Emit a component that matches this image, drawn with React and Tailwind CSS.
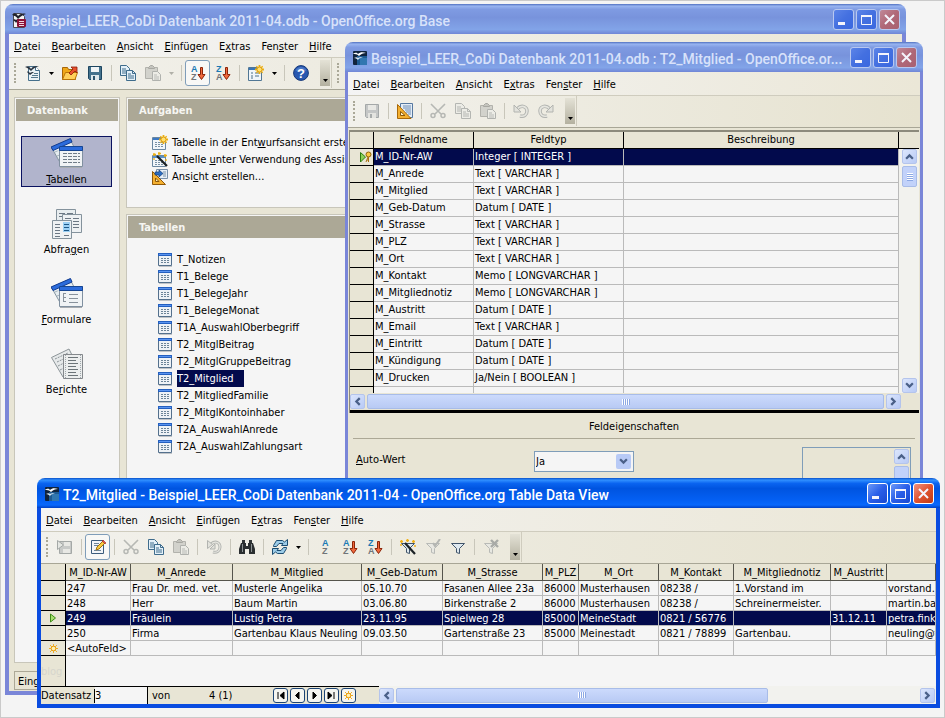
import clsx from "clsx";

const dbTables = [
  "T_Notizen",
  "T1_Belege",
  "T1_BelegeJahr",
  "T1_BelegeMonat",
  "T1A_AuswahlOberbegriff",
  "T2_MitglBeitrag",
  "T2_MitglGruppeBeitrag",
  "T2_Mitglied",
  "T2_MitgliedFamilie",
  "T2_MitglKontoinhaber",
  "T2A_AuswahlAnrede",
  "T2A_AuswahlZahlungsart"
];

const fields = [
  ["M_ID-Nr-AW", "Integer [ INTEGER ]"],
  ["M_Anrede", "Text [ VARCHAR ]"],
  ["M_Mitglied", "Text [ VARCHAR ]"],
  ["M_Geb-Datum", "Datum [ DATE ]"],
  ["M_Strasse", "Text [ VARCHAR ]"],
  ["M_PLZ", "Text [ VARCHAR ]"],
  ["M_Ort", "Text [ VARCHAR ]"],
  ["M_Kontakt", "Memo [ LONGVARCHAR ]"],
  ["M_Mitgliednotiz", "Memo [ LONGVARCHAR ]"],
  ["M_Austritt", "Datum [ DATE ]"],
  ["M_Email", "Text [ VARCHAR ]"],
  ["M_Eintritt", "Datum [ DATE ]"],
  ["M_Kündigung", "Datum [ DATE ]"],
  ["M_Drucken", "Ja/Nein [ BOOLEAN ]"]
];

const columns = [
  { name: "M_ID-Nr-AW", width: "w-[65px]" },
  { name: "M_Anrede", width: "w-[102px]" },
  { name: "M_Mitglied", width: "w-[129px]" },
  { name: "M_Geb-Datum", width: "w-[81px]" },
  { name: "M_Strasse", width: "w-[100px]" },
  { name: "M_PLZ", width: "w-[36px]" },
  { name: "M_Ort", width: "w-[80px]" },
  { name: "M_Kontakt", width: "w-[75px]" },
  { name: "M_Mitgliednotiz", width: "w-[97px]" },
  { name: "M_Austritt", width: "w-[56px]" },
  { name: "", width: "" }
];

const records = [
  ["247", "Frau Dr. med. vet.", "Musterle Angelika", "05.10.70", "Fasanen Allee 23a", "86000", "Musterhausen", "08238 /", "1.Vorstand im", "", "vorstand."],
  ["248", "Herr", "Baum Martin", "03.06.80", "Birkenstraße 2", "86000", "Musterhausen", "08238 /", "Schreinermeister.", "", "martin.ba"],
  ["249", "Fräulein", "Lustig Petra", "23.11.95", "Spielweg 28", "85000", "MeineStadt", "0821 / 56776", "", "31.12.11", "petra.fink"],
  ["250", "Firma", "Gartenbau Klaus Neuling", "09.03.50", "Gartenstraße 23", "85000", "Meinestadt", "0821 / 78899", "Gartenbau.", "", "neuling@t"],
  ["<AutoFeld>", "", "", "", "", "", "", "", "", "", ""]
];

/* ---------- icons ---------- */

function Svg({ size = 16, children }) {
  return (
    <svg width={size} height={size} viewBox={`0 0 ${size} ${size}`} fill="none" aria-hidden="true" className="block shrink-0">
      {children}
    </svg>
  );
}

const AppLogo = () => (
  <Svg>
    <rect x="1" y="1" width="14" height="14" rx="1" fill="#10233c" />
    <path d="M5 6h10v9H5z" fill="#1d5a92" />
    <path d="M8 8h7v7H8z" fill="#3f8ac4" opacity=".6" />
    <path d="M1 4c3-2 4-1 5 0 2-2 5-2 8-1-3 0-5 1-7 3C5 4 3 4 1 4z" fill="#fff" />
    <path d="M2 8c2-1 3-1 4 0 1-1 3-1 5-1-2 1-4 1-5 3-1-1-2-2-4-2z" fill="#dbe8f4" />
  </Svg>
);

const BaseLogo = () => (
  <Svg>
    <path d="M1.500 1.500h8l3 3v11h-11z" fill="#f3f3f3" stroke="#4a4a54" />
    <path d="M0 3c3-3 5-1 6 1 2-2 4-3 8-2-3 1-5 2-8 5-2-3-3-3-6-4z" fill="#20222c" />
    <path d="M1 8c1-1 2-1 3 0 1-1 2-1 3-1l-3 4c-1-2-2-2-3-3z" fill="#20222c" />
    <rect x="5" y="7" width="9" height="8" rx="1" fill="#8c1238" />
    <path d="M7 9h5v1H7zM7 11h5v1H7zM7 13h5v1H7z" fill="#f0d8de" />
  </Svg>
);

const NewIcon = () => (
  <Svg>
    <path d="M3.500 1.500h7l4 4v10h-11z" fill="#eaf2f6" stroke="#46708c" />
    <path d="M10.500 1.500v4h4" fill="#fff" stroke="#46708c" />
    <path d="M0 2c3-2 5 0 6 2 2-3 4-3 8-3-3 1-5 2-8 5-2-2-3-3-6-4z" fill="#28323e" />
    <path d="M2 7c1-1 2 0 3 1 1-1 2-1 4-1l-4 3c-1-1-2-2-3-3z" fill="#28323e" />
    <path d="M9 8.500h4M7 10.500h6M6 12.500h7" stroke="#54788e" />
  </Svg>
);

const OpenIcon = () => (
  <Svg>
    <path d="M.5 14.500v-12h5l1 2h7v10z" fill="#f0a818" stroke="#a86608" />
    <path d="M.5 14.500l3-7h12l-2.500 7z" fill="#ffd05a" stroke="#b87408" />
    <path d="M7 8l4-4-2-2h6v6l-2-2-4 4z" fill="#e8502c" stroke="#8c1c08" strokeWidth=".8" />
  </Svg>
);

const SaveIcon = ({ dim }) => (
  <Svg>
    <path d="M1.500 1.500h13v13h-12l-1-1z" fill={dim ? "#c4c6c6" : "#43718c"} stroke={dim ? "#a4a8a8" : "#1d4560"} />
    <path d="M4 2h8v5H4z" fill={dim ? "#e8e8e4" : "#f0f4f6"} />
    <path d="M4 10h8v5H4z" fill={dim ? "#e4e4e0" : "#dfe8ec"} />
    <path d="M6 11h2v4H6z" fill={dim ? "#a8acac" : "#2a536c"} />
  </Svg>
);

const SaveRecordIcon = () => (
  <Svg>
    <path d="M2.500 2.500h12v12h-12z" fill="#c8cac8" stroke="#a4a8a6" />
    <path d="M7 3h6v4H7zM6 10h7v4H6z" fill="#e8e8e4" />
    <path d="M.5 1.500l6 4.500-6 4.500z" fill="#e4e6e2" stroke="#a4a8a6" />
  </Svg>
);

const CopyIcon = ({ dim }) => {
  const ink = dim ? "#b4b6b2" : "#3f6c8c";
  const paper = dim ? "#ecece6" : "#e4f0f8";
  return (
    <Svg>
      <path d="M.5.5h6l3 3v7h-9z" fill={paper} stroke={ink} />
      <path d="M2 4h4M2 6h5M2 8h4" stroke={ink} />
      <path d="M6.500 5.500h6l3 3v7h-9z" fill={paper} stroke={ink} />
      <path d="M12.500 5.500v3h3M8 9h3M8 11h6M8 13h6" stroke={ink} />
    </Svg>
  );
};

const PasteIcon = () => (
  <Svg>
    <path d="M.5 2.500h12v11H.5z" fill="#d2d2cc" stroke="#b2b2ac" />
    <path d="M3.500 3.500v-1l2-2h2l2 2v1z" fill="#c4c4be" stroke="#a8a8a2" />
    <path d="M7.500 6.500h5l3 3v6h-8z" fill="#ecece6" stroke="#b0b2ae" />
    <path d="M9 10h3M9 12h5M9 14h5" stroke="#b8bab6" />
  </Svg>
);

const CutIcon = () => (
  <Svg>
    <path d="M1 1l10 10M15 1L5 11" stroke="#b6b8b4" strokeWidth="1.600" />
    <circle cx="3" cy="12.500" r="2" stroke="#b6b8b4" strokeWidth="1.500" />
    <circle cx="13" cy="12.500" r="2" stroke="#b6b8b4" strokeWidth="1.500" />
  </Svg>
);

const UndoIcon = ({ flip }) => (
  <svg width="16" height="16" viewBox="0 0 16 16" fill="none" aria-hidden="true" className={clsx("block", flip && "-scale-x-100")}>
    <path d="M4 6c5-5 10-2 10 2 0 4-3 6-7 5" stroke="#b2b4b0" strokeWidth="3.500" />
    <path d="M4 6c5-5 10-2 10 2 0 4-3 6-7 5" stroke="#e6e6e0" strokeWidth="1.600" />
    <path d="M1 2v7h7z" fill="#e2e2dc" stroke="#b2b4b0" />
  </svg>
);

const UndoRecordIcon = () => (
  <Svg>
    <path d="M5 5c5-4 9-1 9 3 0 4-3 6-7 5" stroke="#b2b4b0" strokeWidth="3" />
    <path d="M5 5c5-4 9-1 9 3 0 4-3 6-7 5" stroke="#e6e6e0" strokeWidth="1.200" />
    <path d="M1.500 1.500l5 4-5 4z" fill="#e2e2dc" stroke="#b2b4b0" />
    <path d="M9 5v5H4z" fill="#e2e2dc" stroke="#b2b4b0" />
  </Svg>
);

const SortIcon = ({ desc, plain }) => (
  <svg width="16" height="16" viewBox="0 0 16 16" aria-hidden="true" className="block font-['Liberation_Sans'] text-[9px] font-bold">
    <text x={plain ? 5 : 1} y="7" fill="#1a7ab4">{desc ? "Z" : "A"}</text>
    <text x={plain ? 5 : 1} y="15" fill="#707478">{desc ? "A" : "Z"}</text>
    {!plain && <path d="M10.500 2.500h2v7h2.500l-3.500 5L8 9.500h2.500z" fill="#f0683c" stroke="#8c2408" />}
  </svg>
);

const Star = ({ x, y, r }) => (
  <g transform={`translate(${x} ${y})`}>
    <path d={`M0-${r}V${r}M-${r} 0H${r}`} stroke="#eeb010" strokeWidth="1.800" />
    <path d={`M0-${r}V${r}M-${r} 0H${r}`} stroke="#eeb010" strokeWidth="1.400" transform="rotate(45)" />
    <circle r={r - 2} fill="#ffe070" stroke="#e0a010" />
  </g>
);

const NewFormIcon = () => (
  <Svg>
    <path d="M.5 2.500h13v13H.5z" fill="#f0f5f9" stroke="#517794" />
    <path d="M1 3h12v2H1z" fill="#3a76b8" />
    <path d="M3 8h2M3 11h2M3 13h2M7 8h4M7 11h4" stroke="#4c7088" />
    <Star x={11.5} y={4.5} r={4.5} />
  </Svg>
);

const HelpIcon = () => (
  <svg width="16" height="16" viewBox="0 0 16 16" aria-hidden="true" className="block font-['Liberation_Sans'] text-[13px] font-bold">
    <circle cx="8" cy="8" r="7.400" fill="#2858b0" stroke="#163878" />
    <path d="M2.500 5.500a6 6 0 0 1 11 0c-4 2-7 2-11 0z" fill="#6a94d8" opacity=".5" />
    <text x="8" y="13" textAnchor="middle" fill="#fff">?</text>
  </svg>
);

const DesignIcon = () => (
  <Svg>
    <path d="M3.500.5h12v14h-12z" fill="#e4edf6" stroke="#5678a0" />
    <path d="M6 3h8M6 5h8M8 7h6M9 9h5M11 11h3" stroke="#6c8cb4" />
    <path d="M.5 1.500v14h13.500z" fill="#f4b030" stroke="#a86808" />
    <path d="M3.500 8.500v4h4.500z" fill="#fff4cc" stroke="#8c5808" />
  </Svg>
);

const ViewIcon = () => (
  <Svg>
    <path d="M4.500.5h11v9h-11z" fill="#e8eff6" stroke="#7a90a8" />
    <path d="M11 3h3M11 5h3M11 7h3" stroke="#7890a8" />
    <path d="M.5 2.500v13h13z" fill="#f4b030" stroke="#905808" />
    <path d="M3.500 9v3.500H7z" fill="#fff0c0" stroke="#8c5808" />
    <path d="M3 3h4V1l4 3.500L7 8V6H3z" fill="#2c6cc0" stroke="#14407c" strokeWidth=".7" />
  </Svg>
);

const NewTableIcon = () => (
  <Svg>
    <path d="M.5 2.500h13v12H.5z" fill="#f2f6fa" stroke="#6a87a0" />
    <path d="M1 3h12v2H1z" fill="#3c78c4" />
    <path d="M3 7.500h8M3 9.500h8M3 11.500h8" stroke="#7890a4" strokeDasharray="2 1" />
    <Star x={11.5} y={4.5} r={4.5} />
  </Svg>
);

const WizardIcon = () => (
  <Svg>
    <path d="M.5 3.500h13v11H.5z" fill="#f2f6fa" stroke="#6a87a0" />
    <path d="M1 4h12v2H1z" fill="#5c90c4" />
    <path d="M3 8.500h8M3 10.500h8M3 12.500h8" stroke="#7890a4" strokeDasharray="2 1" />
    <path d="M5 4l10 10" stroke="#1c2226" strokeWidth="2.200" />
    <path d="M2 1v3M1 2.500h3M7 0v3M6 1.500h3M13 2v3M12 3.500h3M14 7v2M2 6v2" stroke="#eeb010" strokeWidth="1.300" />
  </Svg>
);

const TableIcon = () => (
  <Svg size={14}>
    <path d="M.5.5h13v12H.5z" fill="#eef2f6" stroke="#54708c" />
    <path d="M0 0h14v3H0z" fill="#2460c0" />
    <path d="M1 1h12v1H1z" fill="#5a94f0" />
    <path d="M3 5.500h9M3 7.500h9M3 9.500h9" stroke="#6c8498" strokeDasharray="2 1" />
    <path d="M1 13.500h13" stroke="#c0c4c8" />
  </Svg>
);

const TablesLarge = ({ form }) => (
  <Svg size={32}>
    <path d="M.5 9.500L19 1l4 8-8 19h-4z" fill="#e6ecf0" stroke="#8494a0" />
    <path d="M4 14l12-5M6 18l8-3M8 22l6-2" stroke="#a8b4bc" strokeDasharray="3 1" />
    <path d="M0 9L19.500.5l1.500 3.500L2 12.500z" fill="#2c6cdc" stroke="#123c90" />
    <path d="M8.500 8.500h23v20h-23z" fill="#f0f3f5" stroke="#8090a0" />
    <path d="M8.500 8.500h23v4h-23z" fill="#2c6cdc" stroke="#164694" />
    {form ? (
      <path d="M12 15.500h3M12.500 15v9M12 19.500h3M12 23.500h3M18 16.500h9M18 20.500h9M18 24.500h9" stroke="#88929c" />
    ) : (
      <path d="M12 15.500h17M12 18.500h17M12 21.500h17M12 24.500h17" stroke="#707c88" strokeDasharray="4 1" />
    )}
    <path d="M9 29.500h22" stroke="#a8acb0" />
  </Svg>
);

const QueriesLarge = () => (
  <Svg size={32}>
    <path d="M5.500 1.500h19v20h-19z" fill="#e8edef" stroke="#84929c" />
    <path d="M8 5.500h6M16 5.500h6M8 8.500h6M16 8.500h6" stroke="#6c7884" />
    <path d="M11.500 6.500h19v18h-19z" fill="#eef1f3" stroke="#84929c" />
    <path d="M14 10.500h6M22 10.500h6M22 13.500h6M22 16.500h6M22 19.500h6" stroke="#6c7884" />
    <path d="M1.500 12.500h19v18h-19z" fill="#eef1f3" stroke="#84929c" />
    <path d="M4 16.500h5M4 19.500h5M4 22.500h5M4 25.500h5M4 28.500h5M13 27.500h5" stroke="#6c7884" />
    <path d="M12 14h7v10h-7z" fill="#9cd0f4" />
    <path d="M13 16.500h5M13 19.500h5M13 22.500h5" stroke="#1c5888" />
  </Svg>
);

const ReportsLarge = () => (
  <Svg size={32}>
    <path d="M.5 9.500L18 1l7 14-13 14z" fill="#e6e9ea" stroke="#8c9498" />
    <path d="M4 11l13-6M6 14l13-6M7 18l8-4M9 22l6-3" stroke="#8c9498" strokeDasharray="2 1" />
    <path d="M12.500 6.500h19v24h-19z" fill="#eceeee" stroke="#84888c" />
    <path d="M14.500 7v23M29.500 7v23" stroke="#a0a8ac" strokeDasharray="1 1" />
    <path d="M17 9.500h10M17 12.500h8M17 15.500h10M17 18.500h8M17 21.500h10M17 24.500h8M17 27.500h10" stroke="#6c7478" />
  </Svg>
);

const EditIcon = () => (
  <Svg>
    <path d="M1.500 1.500h12v13h-12z" fill="#f2f5f8" stroke="#3c5c7c" />
    <path d="M4 4.500h5M4 6.500h4M4 11.500h7" stroke="#6c8498" />
    <path d="M6 11l1-3 6-6 2 2-6 6z" fill="#f8cc40" stroke="#a07010" />
    <path d="M12 2l1-1 3 3-1 1z" fill="#e05c50" stroke="#a02c20" strokeWidth=".6" />
  </Svg>
);

const FindIcon = () => (
  <Svg>
    <path d="M3 1h3v3H3zM10 1h3v3h-3z" fill="#303436" />
    <path d="M2 4h5v3h2V4h5l2 6v5h-6v-5H6v5H0v-5z" fill="#2a2e30" />
    <path d="M3.500 5v8M12.500 5v8" stroke="#8c9294" />
  </Svg>
);

const RefreshIcon = () => (
  <Svg>
    <path d="M1.500 7.500v-1l3-5h6l2 1.500L15.500.5v6h-6l1.500-2H7l-2.500 3z" fill="#9ccce8" stroke="#1c4c70" />
    <path d="M14.500 8.500v1l-3 5h-6l-2-1.500L.5 15.500v-6h6l-1.500 2h4l2.500-3z" fill="#9ccce8" stroke="#1c4c70" />
  </Svg>
);

const FilterIcon = ({ kind }) => {
  const dim = kind === "apply" || kind === "remove";
  return (
    <Svg>
      <path d="M1.500 4.500h13l-5 5v5l-3-1v-4z" fill={dim ? "#e8e8e2" : "#dfe9ef"} stroke={dim ? "#b8bab6" : "#40546a"} />
      {kind === "auto" && (
        <>
          <path d="M5 4l10 11" stroke="#1c2226" strokeWidth="2.200" />
          <path d="M0 2.500h3M1.500 1v3M6 1.500h3M7.500 0v3M12 2.500h3M13.500 1v3M14 7h2M0 6h2" stroke="#f0b018" strokeWidth="1.300" />
        </>
      )}
      {kind === "apply" && <path d="M8 4l2 3 5-7" stroke="#b4b6b2" strokeWidth="2" />}
      {kind === "remove" && <path d="M8 1l7 7M15 1L8 8" stroke="#a8aaa6" strokeWidth="2.400" />}
    </Svg>
  );
};

const KeyMarker = () => (
  <svg width="14" height="12" viewBox="0 0 14 12" fill="none" aria-hidden="true" className="ml-auto block">
    <path d="M1.500 1.500l5 4.500-5 5z" fill="#8cd058" stroke="#2c7c10" />
    <circle cx="9.500" cy="3.500" r="2.500" fill="#f8c840" stroke="#906008" />
    <path d="M9 6l-2 5M9.500 6v5M8 9h2" stroke="#a87010" />
  </svg>
);

const RowArrow = () => (
  <svg width="8" height="10" viewBox="0 0 8 10" aria-hidden="true" className="mx-auto block">
    <path d="M1.500 1l5 4-5 4z" fill="#a8e070" stroke="#3c8c18" />
  </svg>
);

const NewRow = () => (
  <svg width="9" height="9" viewBox="0 0 9 9" aria-hidden="true" className="mx-auto block">
    <path d="M4.500 0v9M0 4.500h9M1 1l7 7M8 1L1 8" stroke="#f0b028" />
    <circle cx="4.500" cy="4.500" r="2.300" fill="#fff0b0" stroke="#e89c10" />
  </svg>
);

/* ---------- window chrome ---------- */

function Mnemonic({ text }) {
  const [before, after] = text.split("&");
  if (after === undefined) return text;
  return (
    <>
      {before}
      <u className="underline-offset-1">{after[0]}</u>
      {after.slice(1)}
    </>
  );
}

function CaptionButton({ kind, active }) {
  return (
    <button
      type="button"
      aria-label={kind}
      className={clsx(
        "grid size-[21px] place-items-center rounded-[3px] border",
        active ? "border-white" : "border-[#b8c8f0]",
        kind === "close" && active && "bg-linear-to-br from-[#f0907c] via-[#e0532f] to-[#c03a14]",
        kind === "close" && !active && "bg-linear-to-br from-[#c08898] via-[#b06878] to-[#a86070]",
        kind !== "close" && active && "bg-linear-to-br from-[#6c98f8] via-[#2a5ee8] to-[#1848d0]",
        kind !== "close" && !active && "bg-linear-to-br from-[#5c84e8] via-[#4470e0] to-[#3a68e0]"
      )}
    >
      <svg width="13" height="13" viewBox="0 0 13 13" fill="none" stroke="#f4f4fc" aria-hidden="true">
        {kind === "minimize" && <path d="M1 10.500h7" strokeWidth="3" />}
        {kind === "maximize" && <path d="M1.500 2.500h10v9h-10zM1 2.500h11M1 3.500h11" />}
        {kind === "close" && <path d="M2 2l9 9M11 2l-9 9" strokeWidth="2" />}
      </svg>
    </button>
  );
}

function Window({ title, logo, active, className, bodyClass, children }) {
  return (
    <section className={clsx("absolute flex flex-col overflow-hidden rounded-t-lg", className)}>
      <header
        className={clsx(
          "flex h-[30px] shrink-0 items-center pt-px pr-1.5 pl-[7px]",
          active
            ? "bg-[linear-gradient(#0a50c8_0,#3090ff_7%,#0a64f0_18%,#0054e0_35%,#0460f4_75%,#0868fc_90%,#0040c4_100%)]"
            : "bg-[linear-gradient(#5070c0_0,#98b4f0_7%,#7f9be2_18%,#7893dc_45%,#82a4e8_85%,#7086d6_100%)]"
        )}
      >
        {logo}
        <h1 className={clsx("ml-[3px] min-w-0 flex-1 overflow-hidden pt-0.5 font-['Roboto'] text-sm leading-5 font-medium whitespace-nowrap", active ? "text-white" : "text-[#d8e2fa]")}>
          {title}
        </h1>
        <div className="flex gap-0.5">
          <CaptionButton kind="minimize" active={active} />
          <CaptionButton kind="maximize" active={active} />
          <CaptionButton kind="close" active={active} />
        </div>
      </header>
      <div className={clsx("flex flex-1 flex-col bg-[#e8e5d5]", active ? "border-[#0a4ce0]" : "border-[#7a86d8]", bodyClass)}>
        {children}
      </div>
    </section>
  );
}

function MenuBar({ items, children }) {
  return (
    <nav className="flex h-6 items-center gap-[11px] border-b border-[#cfccbe] bg-linear-to-r from-[#f4f4f4] to-[#ebe7d7] pt-0.5 pl-[5px]">
      {items.map((item) => (
        <button key={item} type="button">
          <Mnemonic text={item} />
        </button>
      ))}
      {children}
    </nav>
  );
}

const Grip = () => (
  <span className="flex w-[11px] shrink-0 justify-center">
    <span className="h-5 border-l-2 border-dotted border-[#aaa898]" />
  </span>
);

const Sep = () => (
  <span className="flex w-2 shrink-0 justify-center">
    <span className="h-4 w-px bg-[#c8c6ba]" />
  </span>
);

const Drop = ({ dim }) => (
  <button type="button" aria-label="Auswahl" className="grid w-3 shrink-0 place-items-center">
    <svg width="5" height="3" viewBox="0 0 5 3" aria-hidden="true">
      <path d="M0 0h5L2.500 3z" fill={dim ? "#b0b0a8" : "#000"} />
    </svg>
  </button>
);

function Tool({ label, pressed, children }) {
  return (
    <button
      type="button"
      aria-label={label}
      className={clsx("grid h-[26px] w-[25px] shrink-0 place-items-center", pressed && "rounded-[3px] border border-[#7f9db9] bg-[#f8f8f6]")}
    >
      {children}
    </button>
  );
}

function ToolBar({ children, extra }) {
  return (
    <div className="flex h-8 items-center border-b border-[#a8a696] bg-linear-to-r from-[#f2f1ec] to-[#e6e2cf] pb-px">
      <Grip />
      {children}
      <button type="button" aria-label="Weitere" className="ml-[7px] flex h-[26px] w-2.5 items-end justify-center bg-linear-to-b from-[#e4e2d6] to-[#b4b1a0] pb-1">
        <svg width="5" height="3" viewBox="0 0 5 3" aria-hidden="true">
          <path d="M0 0h5L2.500 3z" fill="#000" />
        </svg>
      </button>
      <span className="ml-px h-full w-px bg-[#cfccbe]" />
      {extra}
    </div>
  );
}

const chevrons = {
  up: "M1 6l3-3 3 3",
  down: "M1 2l3 3 3-3",
  left: "M6 1L3 4l3 3",
  right: "M2 1l3 3-3 3"
};

const ScrollButton = ({ dir }) => (
  <button type="button" aria-label={dir} className="grid size-[15px] shrink-0 place-items-center rounded-[2px] border border-[#b4c4ec] bg-linear-to-br from-[#dce6fc] to-[#b8caf6]">
    <svg width="9" height="9" viewBox="0 0 8 8" fill="none" aria-hidden="true">
      <path d={chevrons[dir]} stroke="#4a6088" strokeWidth="2" />
    </svg>
  </button>
);

const HThumb = ({ className }) => (
  <div className={clsx("flex h-[15px] items-center justify-center rounded-[2px] border border-[#a8bce8] bg-linear-to-b from-[#ccdafc] to-[#b8caf4]", className)}>
    {[0, 1, 2, 3].map((n) => (
      <span key={n} className="h-1.5 w-0.5 border-r border-[#8ca8e4] bg-white" />
    ))}
  </div>
);

/* ---------- database window ---------- */

function PanelHeader({ children }) {
  return <h2 className="m-px h-[22px] bg-[#aca896] pl-[11px] text-[11px] leading-6 font-bold text-[#f6f6f2]">{children}</h2>;
}

function NavItem({ label, selected, children }) {
  return (
    <button
      type="button"
      className={clsx("flex h-[51px] w-[91px] flex-col items-center justify-between border pt-px", selected ? "border-[#0a1260] bg-[#b1b4cc]" : "border-transparent")}
    >
      {children}
      <span className="leading-3">
        <Mnemonic text={label} />
      </span>
    </button>
  );
}

function TaskRow({ icon, label }) {
  return (
    <li>
      <button type="button" className="flex h-[17px] items-center gap-1 whitespace-nowrap">
        {icon}
        <span>
          <Mnemonic text={label} />
        </span>
      </button>
    </li>
  );
}

function DatabaseWindow() {
  return (
    <Window
      title="Beispiel_LEER_CoDi Datenbank 2011-04.odb - OpenOffice.org Base"
      logo={<BaseLogo />}
      className="top-[3px] right-[38px] bottom-[22px] left-1"
      bodyClass="border-x-4 border-b-4"
    >
      <MenuBar items={["&Datei", "&Bearbeiten", "&Ansicht", "&Einfügen", "E&xtras", "Fen&ster", "&Hilfe"]}>
        <button type="button" aria-label="Dokument schließen" className="mr-2 ml-auto">
          <svg width="8" height="8" viewBox="0 0 8 8" aria-hidden="true">
            <path d="M0 0l8 8M8 0L0 8" stroke="#707068" strokeWidth="1.500" />
          </svg>
        </button>
      </MenuBar>
      <ToolBar extra={<Grip />}>
        <Tool label="Neu"><NewIcon /></Tool>
        <Drop />
        <Tool label="Öffnen"><OpenIcon /></Tool>
        <Tool label="Speichern"><SaveIcon /></Tool>
        <Sep />
        <Tool label="Kopieren"><CopyIcon /></Tool>
        <Tool label="Einfügen"><PasteIcon /></Tool>
        <Drop dim />
        <Sep />
        <Tool label="Aufsteigend sortieren" pressed><SortIcon /></Tool>
        <Tool label="Absteigend sortieren"><SortIcon desc /></Tool>
        <Sep />
        <Tool label="Formular"><NewFormIcon /></Tool>
        <Drop />
        <Sep />
        <Tool label="Hilfe"><HelpIcon /></Tool>
      </ToolBar>
      <div className="flex flex-1 gap-1.5 pt-[7px] pl-[5px]">
        <aside className="w-[106px] shrink-0 border border-[#c8c6ba] bg-[#f5f5f5]">
          <PanelHeader>Datenbank</PanelHeader>
          <div className="mt-[15px] ml-1.5 flex flex-col gap-[19px]">
            <NavItem label="&Tabellen" selected><TablesLarge /></NavItem>
            <NavItem label="Abfra&gen"><QueriesLarge /></NavItem>
            <NavItem label="&Formulare"><TablesLarge form /></NavItem>
            <NavItem label="Be&richte"><ReportsLarge /></NavItem>
          </div>
        </aside>
        <div className="flex min-w-0 flex-1 flex-col gap-1.5">
          <section className="h-[111px] border border-[#c8c6ba] bg-[#f5f5f5]">
            <PanelHeader>Aufgaben</PanelHeader>
            <ul className="mt-[13px] pl-[25px]">
              <TaskRow icon={<NewTableIcon />} label="Tabelle in der Ent&wurfsansicht erste" />
              <TaskRow icon={<WizardIcon />} label="Tabelle &unter Verwendung des Assis" />
              <TaskRow icon={<ViewIcon />} label="Ansi&cht erstellen..." />
            </ul>
          </section>
          <section className="flex-1 border border-[#c8c6ba] bg-[#f5f5f5]">
            <PanelHeader>Tabellen</PanelHeader>
            <ul className="mt-[13px] pl-[31px]">
              {dbTables.map((name) => (
                <li key={name} className="flex h-[17px] items-center gap-[5px]">
                  <TableIcon />
                  <span className={clsx("leading-[17px]", name === "T2_Mitglied" && "bg-[#020a4c] pr-2.5 text-white")}>{name}</span>
                </li>
              ))}
            </ul>
          </section>
        </div>
      </div>
      <footer className="mt-2 mb-px ml-[5px] h-[19px] w-64 border border-[#aca896] pl-[3px] leading-5">Eing</footer>
    </Window>
  );
}

/* ---------- table design window ---------- */

function DesignWindow() {
  return (
    <Window
      title="Beispiel_LEER_CoDi Datenbank 2011-04.odb : T2_Mitglied - OpenOffice.or..."
      logo={<AppLogo />}
      className="top-[41px] right-[21px] left-[344px]"
      bodyClass="border-x-[3px]"
    >
      <MenuBar items={["&Datei", "&Bearbeiten", "&Ansicht", "E&xtras", "Fen&ster", "&Hilfe"]} />
      <ToolBar>
        <Tool label="Speichern"><SaveIcon dim /></Tool>
        <Sep />
        <Tool label="Entwurf"><DesignIcon /></Tool>
        <Sep />
        <Tool label="Ausschneiden"><CutIcon /></Tool>
        <Tool label="Kopieren"><CopyIcon dim /></Tool>
        <Tool label="Einfügen"><PasteIcon /></Tool>
        <Sep />
        <Tool label="Rückgängig"><UndoIcon /></Tool>
        <Tool label="Wiederherstellen"><UndoIcon flip /></Tool>
      </ToolBar>
      <div className="mx-px mt-0.5 border-t-2 border-l border-[#8c8a7c] bg-[#e8e5d5]">
        <div className="flex">
          <table className="flex-1 table-fixed border-separate border-spacing-0 bg-[#f5f5f5]">
            <thead>
              <tr className="h-[17px] bg-[#e8e5d5]">
                <th className="w-6 border-r border-b border-black p-0" />
                <th className="w-[100px] border-r border-b border-black p-0 font-normal">Feldname</th>
                <th className="w-[150px] border-r border-b border-black p-0 font-normal">Feldtyp</th>
                <th className="border-r border-b border-black p-0 font-normal">Beschreibung</th>
              </tr>
            </thead>
            <tbody>
              {fields.map(([name, type], i) => (
                <tr key={name} className={clsx("h-[17px]", i === 0 && "bg-[#020a4c] text-white")}>
                  <td className="border-r border-b border-black bg-[#e8e5d5] p-0">{i === 0 && <KeyMarker />}</td>
                  <td className="border-r border-b border-[#bababa] p-0 pl-px">{name}</td>
                  <td className="border-r border-b border-[#bababa] p-0 pl-px">{type}</td>
                  <td className="border-r border-b border-[#bababa] p-0" />
                </tr>
              ))}
              <tr className="h-1.5">
                <td className="border-r border-black bg-[#e8e5d5] p-0" />
                <td className="border-r border-[#bababa] p-0" />
                <td className="border-r border-[#bababa] p-0" />
                <td className="border-r border-[#bababa] p-0" />
              </tr>
            </tbody>
          </table>
          <div className="flex w-5 flex-col">
            <div className="h-[17px] border-b border-black" />
            <div className="flex flex-1 flex-col items-end bg-[#f2f2ee] pr-0.5">
              <ScrollButton dir="up" />
              <div className="mt-0.5 flex h-[21px] w-[15px] flex-col items-center justify-center rounded-[2px] border border-[#a8bce8] bg-[#c2d2fa]">
                {[0, 1, 2, 3].map((n) => (
                  <span key={n} className="h-0.5 w-1.5 border-b border-[#8ca8e4] bg-white" />
                ))}
              </div>
              <span className="flex-1" />
              <ScrollButton dir="down" />
            </div>
          </div>
        </div>
        <div className="mr-[18px] flex items-center gap-0.5 py-px">
          <ScrollButton dir="left" />
          <HThumb className="flex-1" />
          <ScrollButton dir="right" />
        </div>
        <div className="h-[3px] bg-black" />
      </div>
      <h2 className="mx-[5px] mt-1.5 h-5 border-b border-[#aca896] text-center leading-4">Feldeigenschaften</h2>
      <div className="flex items-start pt-2 pr-[9px] pl-2">
        <label htmlFor="auto-wert" className="w-[178px] pt-1.5">
          <Mnemonic text="&Auto-Wert" />
        </label>
        <div className="relative mt-1">
          <select id="auto-wert" defaultValue="Ja" className="h-[21px] w-[100px] appearance-none border border-[#7f9db9] bg-[#f5f5f5] pl-px">
            <option>Ja</option>
            <option>Nein</option>
          </select>
          <span className="pointer-events-none absolute top-[3px] right-[3px] grid size-[15px] place-items-center rounded-[2px] bg-[#b8caf6]">
            <svg width="9" height="9" viewBox="0 0 8 8" fill="none" aria-hidden="true">
              <path d="M1 2l3 3 3-3" stroke="#4a6088" strokeWidth="2" />
            </svg>
          </span>
        </div>
        <div className="ml-auto flex h-14 w-[109px] flex-col items-end gap-0.5 border border-[#7f9db9] pt-px pr-px">
          <ScrollButton dir="up" />
          <div className="h-8 w-[15px] rounded-[2px] border border-[#a8bce8] bg-[#c2d2fa]" />
        </div>
      </div>
    </Window>
  );
}

/* ---------- table data window ---------- */

const navPaths = {
  "Erster Datensatz": "M2 1v7M8 1v7L4 4.500z",
  "Vorheriger Datensatz": "M6 1v7L2.500 4.500z",
  "Nächster Datensatz": "M3 1v7l3.500-3.500z",
  "Letzter Datensatz": "M1 1v7l4-3.500zM7 1v7"
};

function DataWindow() {
  return (
    <Window
      active
      title="T2_Mitglied - Beispiel_LEER_CoDi Datenbank 2011-04 - OpenOffice.org Table Data View"
      logo={<AppLogo />}
      className="top-[477px] right-1 left-9"
      bodyClass="border-x-4 border-b-4"
    >
      <MenuBar items={["&Datei", "&Bearbeiten", "&Ansicht", "&Einfügen", "E&xtras", "Fen&ster", "&Hilfe"]} />
      <ToolBar>
        <Tool label="Datensatz speichern"><SaveRecordIcon /></Tool>
        <Sep />
        <Tool label="Daten bearbeiten" pressed><EditIcon /></Tool>
        <Sep />
        <Tool label="Ausschneiden"><CutIcon /></Tool>
        <Tool label="Kopieren"><CopyIcon /></Tool>
        <Tool label="Einfügen"><PasteIcon /></Tool>
        <Sep />
        <Tool label="Rückgängig"><UndoRecordIcon /></Tool>
        <Sep />
        <Tool label="Suchen"><FindIcon /></Tool>
        <Sep />
        <Tool label="Aktualisieren"><RefreshIcon /></Tool>
        <Drop />
        <Sep />
        <Tool label="Sortierung"><SortIcon plain /></Tool>
        <Tool label="Aufsteigend sortieren"><SortIcon /></Tool>
        <Tool label="Absteigend sortieren"><SortIcon desc /></Tool>
        <Sep />
        <Tool label="AutoFilter"><FilterIcon kind="auto" /></Tool>
        <Tool label="Filter anwenden"><FilterIcon kind="apply" /></Tool>
        <Tool label="Standardfilter"><FilterIcon /></Tool>
        <Sep />
        <Tool label="Filter entfernen"><FilterIcon kind="remove" /></Tool>
      </ToolBar>
      <table className="w-full table-fixed border-separate border-spacing-0 bg-[#f5f5f5] leading-[13px]">
        <thead>
          <tr className="h-[17px] bg-[#e8e5d5]">
            <th className="w-[25px] border-r border-b border-black p-0" />
            {columns.map((col) => (
              <th key={col.name} className={clsx("overflow-hidden border-r border-b border-[#55544c] p-0 pt-px font-normal whitespace-nowrap", col.width)}>
                {col.name}
              </th>
            ))}
          </tr>
        </thead>
        <tbody>
          {records.map((row, i) => (
            <tr key={row[0]} className={clsx("h-[15px]", i === 2 && "bg-[#020a4c] text-white")}>
              <td className="border-r border-b border-black bg-[#e8e5d5] p-0">
                {i === 2 && <RowArrow />}
                {i === 4 && <NewRow />}
              </td>
              {row.map((cell, c) => (
                <td key={c} className="overflow-hidden border-r border-b border-[#bababa] p-0 pt-px pl-px whitespace-nowrap">
                  {cell}
                </td>
              ))}
            </tr>
          ))}
          <tr className="h-[30px]">
            <td className="border-r border-black bg-[#e8e5d5] p-0 text-[#d6d5cc]">blog</td>
            <td colSpan={11} className="p-0" />
          </tr>
        </tbody>
      </table>
      <div className="flex h-[18px]">
        <div className="flex w-[338px] items-center border-t border-black">
          <label htmlFor="datensatz" className="w-[54px] border-r border-black">Datensatz</label>
          <input id="datensatz" defaultValue="3" className="h-full w-[53px] border-r border-black bg-[#f5f5f5]" />
          <span className="ml-1 w-[57px]">von</span>
          <span className="w-16">4 (1)</span>
          <div className="flex gap-0.5">
            {Object.entries(navPaths).map(([label, d]) => (
              <button key={label} type="button" aria-label={label} className="grid size-[15px] place-items-center rounded-[3px] border border-[#1c4474] bg-[#f5f5f0]">
                <svg width="9" height="9" viewBox="0 0 9 9" aria-hidden="true">
                  <path d={d} fill="#000" stroke="#000" />
                </svg>
              </button>
            ))}
            <button type="button" aria-label="Neuer Datensatz" className="grid size-[15px] place-items-center rounded-[3px] border border-[#1c4474] bg-[#f5f5f0]">
              <NewRow />
            </button>
          </div>
        </div>
        <div className="flex flex-1 items-center gap-0.5 bg-[#f2f2ee] pr-px">
          <ScrollButton dir="left" />
          <HThumb className="w-[372px]" />
          <span className="flex-1" />
          <ScrollButton dir="right" />
        </div>
      </div>
    </Window>
  );
}

export default function App() {
  return (
    <main className="relative min-h-screen overflow-hidden border border-[#cacaca] bg-[#f4f4f4] font-['DejaVu_Sans_Condensed','DejaVu_Sans',sans-serif] text-[11px] leading-[14px] text-black">
      <DatabaseWindow />
      <DesignWindow />
      <DataWindow />
    </main>
  );
}
